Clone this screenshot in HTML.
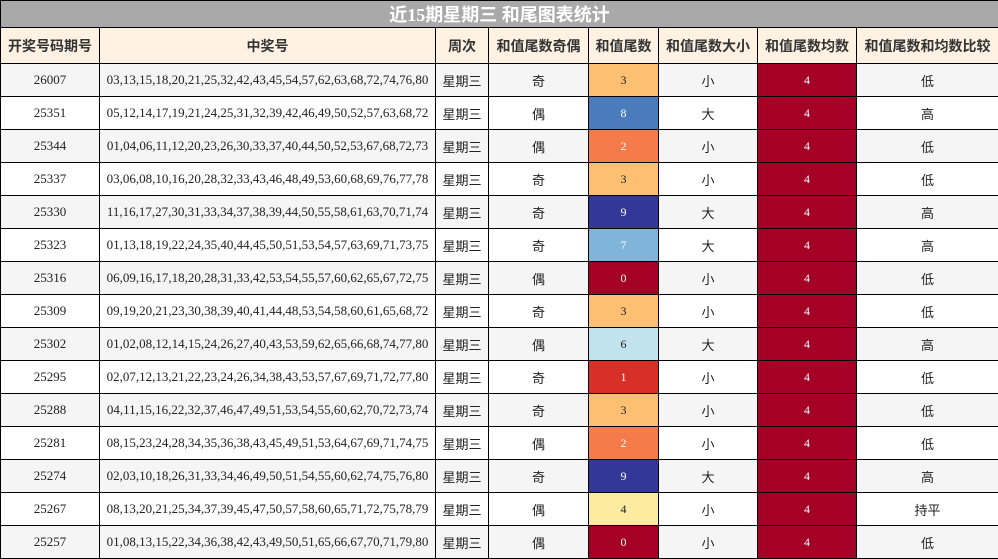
<!DOCTYPE html><html><head><meta charset="utf-8"><style>
body{margin:0;background:#fff;}
table{border-collapse:collapse;table-layout:fixed;width:998px;font-family:"Liberation Serif","Noto Sans CJK SC",serif;font-size:13px;color:#222}
td{border:1px solid #000;text-align:center;padding:0;height:32px;overflow:hidden;white-space:nowrap}
.t td{background:#a9a9a9;color:#fff;font-weight:bold;font-size:18px;height:26px;font-family:"Liberation Serif","Noto Sans CJK SC",sans-serif}
.h td{background:#fff2e3;font-weight:bold;font-size:14px;height:35px;font-family:"Noto Sans CJK SC",sans-serif;color:#333}
tr.o td{background:#f5f5f5}
.c{font-family:"Noto Sans CJK SC",sans-serif;font-size:13px}
td.a{background:#a50026!important;color:#fff;font-size:12px}
.d0{background:#a50026!important;color:#fff}.d1{background:#d73027!important;color:#fff}.d2{background:#f67b4a!important;color:#fff}
.d3{background:#fdbf71!important}.d4{background:#feeba2!important}.d6{background:#c1e3ee!important}
.d7{background:#7fb5d8!important;color:#fff}.d8{background:#4a7bbd!important;color:#fff}.d9{background:#333797!important;color:#fff}
.n{font-size:12px}
</style></head><body><table>
<colgroup><col style="width:99px"><col style="width:336px"><col style="width:53px"><col style="width:100px"><col style="width:70px"><col style="width:99px"><col style="width:99px"><col style="width:142px"></colgroup>
<tr class="t"><td colspan="8">近15期星期三 和尾图表统计</td></tr>
<tr class="h"><td>开奖号码期号</td><td>中奖号</td><td>周次</td><td>和值尾数奇偶</td><td>和值尾数</td><td>和值尾数大小</td><td>和值尾数均数</td><td>和值尾数和均数比较</td></tr>
<tr class="o"><td>26007</td><td>03,13,15,18,20,21,25,32,42,43,45,54,57,62,63,68,72,74,76,80</td><td class="c">星期三</td><td class="c">奇</td><td class="n d3">3</td><td class="c">小</td><td class="a">4</td><td class="c">低</td></tr>
<tr><td>25351</td><td>05,12,14,17,19,21,24,25,31,32,39,42,46,49,50,52,57,63,68,72</td><td class="c">星期三</td><td class="c">偶</td><td class="n d8">8</td><td class="c">大</td><td class="a">4</td><td class="c">高</td></tr>
<tr class="o"><td>25344</td><td>01,04,06,11,12,20,23,26,30,33,37,40,44,50,52,53,67,68,72,73</td><td class="c">星期三</td><td class="c">偶</td><td class="n d2">2</td><td class="c">小</td><td class="a">4</td><td class="c">低</td></tr>
<tr><td>25337</td><td>03,06,08,10,16,20,28,32,33,43,46,48,49,53,60,68,69,76,77,78</td><td class="c">星期三</td><td class="c">奇</td><td class="n d3">3</td><td class="c">小</td><td class="a">4</td><td class="c">低</td></tr>
<tr class="o"><td>25330</td><td>11,16,17,27,30,31,33,34,37,38,39,44,50,55,58,61,63,70,71,74</td><td class="c">星期三</td><td class="c">奇</td><td class="n d9">9</td><td class="c">大</td><td class="a">4</td><td class="c">高</td></tr>
<tr><td>25323</td><td>01,13,18,19,22,24,35,40,44,45,50,51,53,54,57,63,69,71,73,75</td><td class="c">星期三</td><td class="c">奇</td><td class="n d7">7</td><td class="c">大</td><td class="a">4</td><td class="c">高</td></tr>
<tr class="o"><td>25316</td><td>06,09,16,17,18,20,28,31,33,42,53,54,55,57,60,62,65,67,72,75</td><td class="c">星期三</td><td class="c">偶</td><td class="n d0">0</td><td class="c">小</td><td class="a">4</td><td class="c">低</td></tr>
<tr><td>25309</td><td>09,19,20,21,23,30,38,39,40,41,44,48,53,54,58,60,61,65,68,72</td><td class="c">星期三</td><td class="c">奇</td><td class="n d3">3</td><td class="c">小</td><td class="a">4</td><td class="c">低</td></tr>
<tr class="o"><td>25302</td><td>01,02,08,12,14,15,24,26,27,40,43,53,59,62,65,66,68,74,77,80</td><td class="c">星期三</td><td class="c">偶</td><td class="n d6">6</td><td class="c">大</td><td class="a">4</td><td class="c">高</td></tr>
<tr><td>25295</td><td>02,07,12,13,21,22,23,24,26,34,38,43,53,57,67,69,71,72,77,80</td><td class="c">星期三</td><td class="c">奇</td><td class="n d1">1</td><td class="c">小</td><td class="a">4</td><td class="c">低</td></tr>
<tr class="o"><td>25288</td><td>04,11,15,16,22,32,37,46,47,49,51,53,54,55,60,62,70,72,73,74</td><td class="c">星期三</td><td class="c">奇</td><td class="n d3">3</td><td class="c">小</td><td class="a">4</td><td class="c">低</td></tr>
<tr><td>25281</td><td>08,15,23,24,28,34,35,36,38,43,45,49,51,53,64,67,69,71,74,75</td><td class="c">星期三</td><td class="c">偶</td><td class="n d2">2</td><td class="c">小</td><td class="a">4</td><td class="c">低</td></tr>
<tr class="o"><td>25274</td><td>02,03,10,18,26,31,33,34,46,49,50,51,54,55,60,62,74,75,76,80</td><td class="c">星期三</td><td class="c">奇</td><td class="n d9">9</td><td class="c">大</td><td class="a">4</td><td class="c">高</td></tr>
<tr><td>25267</td><td>08,13,20,21,25,34,37,39,45,47,50,57,58,60,65,71,72,75,78,79</td><td class="c">星期三</td><td class="c">偶</td><td class="n d4">4</td><td class="c">小</td><td class="a">4</td><td class="c">持平</td></tr>
<tr class="o"><td>25257</td><td>01,08,13,15,22,34,36,38,42,43,49,50,51,65,66,67,70,71,79,80</td><td class="c">星期三</td><td class="c">偶</td><td class="n d0">0</td><td class="c">小</td><td class="a">4</td><td class="c">低</td></tr>
</table></body></html>
